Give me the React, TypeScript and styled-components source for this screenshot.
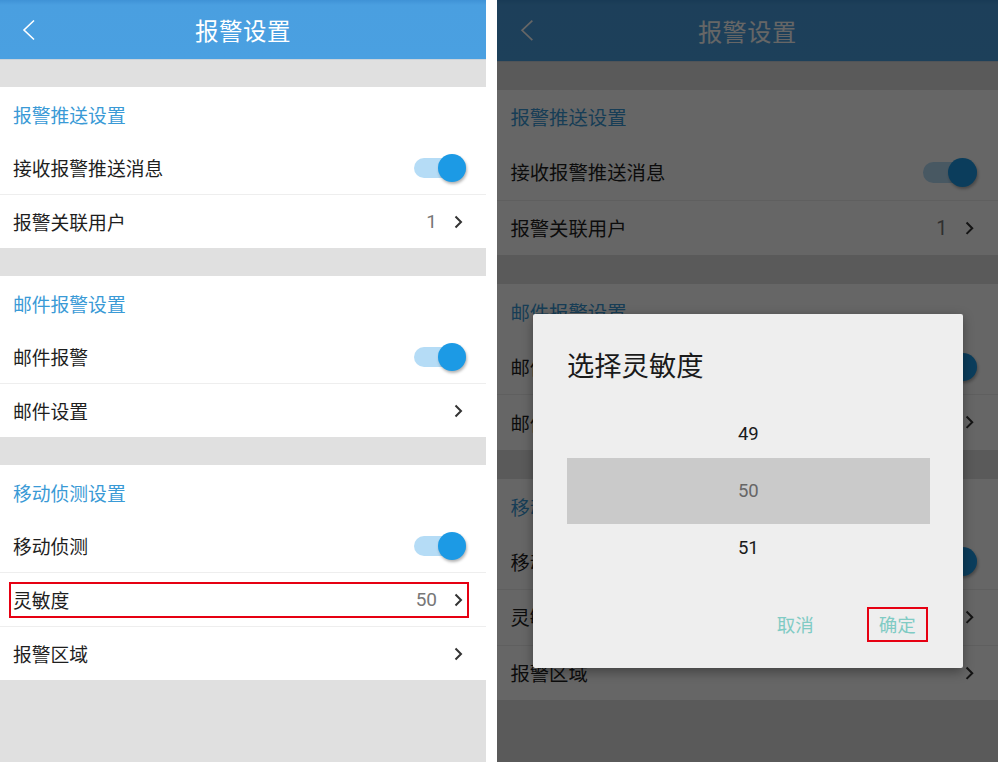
import React from "react";
import styled, { createGlobalStyle } from "styled-components";

const GlobalStyle = createGlobalStyle`
  html, body {
    margin: 0;
    padding: 0;
    background: #ffffff;
  }
  body {
    font-family: Roboto, "Noto Sans CJK SC", "Noto Sans", sans-serif;
  }
`;

const Page = styled.div`
  display: flex;
  gap: 11px;
  width: 998px;
  height: 762px;
  overflow: hidden;
`;

const Screen = styled.div<{ $zoom?: number }>`
  position: relative;
  flex: none;
  width: 486px;
  height: ${(p) => 762 / (p.$zoom || 1)}px;
  zoom: ${(p) => p.$zoom || 1};
  background: #e0e0e0;
  overflow: hidden;
  display: flex;
  flex-direction: column;
`;

const TopBar = styled.header`
  display: grid;
  grid-template-columns: 60px 1fr 60px;
  align-items: center;
  height: 59px;
  flex: none;
  background: linear-gradient(#3f92d6 0, #4a9fe0 5px, #4aa0e1 100%);
  border-bottom: 1px solid #c9d3db;
`;

const BackButton = styled.div`
  display: flex;
  align-items: center;
  padding-left: 22px;
  height: 100%;
`;

const Title = styled.h1`
  margin: 0;
  text-align: center;
  color: #ffffff;
  font-size: 23.5px;
  font-weight: 400;
  letter-spacing: 0.5px;
`;

const Sections = styled.div`
  display: flex;
  flex-direction: column;
  gap: 28px;
  padding-top: 27px;
`;

const Section = styled.section`
  background: #ffffff;
  display: flex;
  flex-direction: column;
`;

const SectionTitle = styled.div`
  height: 54px;
  display: flex;
  align-items: center;
  padding-left: 13px;
  color: #3a9ad6;
  font-size: 18.8px;
`;

const Row = styled.div`
  position: relative;
  height: 53px;
  display: flex;
  align-items: center;
  justify-content: space-between;
  padding: 0 20px 0 13px;
  color: #1e1e1e;
  font-size: 18.8px;
  & + & {
    border-top: 1px solid #eeeeee;
  }
`;

const Trailing = styled.div`
  display: flex;
  align-items: center;
  gap: 17px;
  padding-right: 3px;
`;

const Value = styled.span`
  color: #777777;
  font-size: 19px;
`;

const Track = styled.div`
  position: relative;
  width: 52px;
  height: 20px;
  border-radius: 10px;
  background: #b5dcf6;
`;

const Thumb = styled.div`
  position: absolute;
  right: 0;
  top: -4px;
  width: 28px;
  height: 28px;
  border-radius: 50%;
  background: #1c9ae5;
  box-shadow: 1px 2px 3px rgba(0, 0, 0, 0.3);
`;

const Highlight = styled.div`
  position: absolute;
  left: 9px;
  right: 17px;
  top: 9px;
  height: 36px;
  box-sizing: border-box;
  border: 2px solid #e60012;
  pointer-events: none;
`;

const Overlay = styled.div`
  position: absolute;
  inset: 0;
  background: rgba(0, 0, 0, 0.6);
`;

const Dialog = styled.div`
  position: absolute;
  left: 35px;
  top: 305px;
  width: 417px;
  height: 344px;
  box-sizing: border-box;
  background: #eeeeee;
  border-radius: 2px;
  box-shadow: 0 3px 10px rgba(0, 0, 0, 0.35);
  display: flex;
  flex-direction: column;
  padding-top: 34px;
`;

const DialogTitle = styled.div`
  padding-left: 33px;
  line-height: 36px;
  font-size: 26.5px;
  color: #1a1a1a;
`;

const Picker = styled.div`
  margin: 23px 32px 0 33px;
  display: flex;
  flex-direction: column;
`;

const PickerItem = styled.div<{ $selected?: boolean }>`
  height: ${(p) => (p.$selected ? 64 : 47)}px;
  display: flex;
  align-items: center;
  justify-content: center;
  font-size: 18px;
  color: ${(p) => (p.$selected ? "#666666" : "#1a1a1a")};
  background: ${(p) => (p.$selected ? "#cacaca" : "transparent")};
`;

const Actions = styled.div`
  display: flex;
  justify-content: flex-end;
  gap: 40px;
  margin-top: 33px;
  padding-right: 34px;
`;

const ActionButton = styled.div<{ $highlight?: boolean }>`
  width: 59px;
  height: 34px;
  box-sizing: border-box;
  display: flex;
  align-items: center;
  justify-content: center;
  color: #80cbc4;
  font-size: 18px;
  border: 2px solid ${(p) => (p.$highlight ? "#e60012" : "transparent")};
`;

const Chevron = ({ color = "#333333" }: { color?: string }) => (
  <svg width="9" height="14" viewBox="0 0 9 14">
    <polyline points="1.5,1.5 7,7 1.5,12.5" fill="none" stroke={color} strokeWidth="2" />
  </svg>
);

const BackIcon = () => (
  <svg width="14" height="22" viewBox="0 0 14 22">
    <polyline points="12,1.5 2,11 12,20.5" fill="none" stroke="#ffffff" strokeWidth="1.6" />
  </svg>
);

const Toggle = () => (
  <Track>
    <Thumb />
  </Track>
);

type Item = { label: string; value?: string; toggle?: boolean; mark?: boolean };

const sections: { title: string; items: Item[] }[] = [
  {
    title: "报警推送设置",
    items: [
      { label: "接收报警推送消息", toggle: true },
      { label: "报警关联用户", value: "1" },
    ],
  },
  {
    title: "邮件报警设置",
    items: [
      { label: "邮件报警", toggle: true },
      { label: "邮件设置" },
    ],
  },
  {
    title: "移动侦测设置",
    items: [
      { label: "移动侦测", toggle: true },
      { label: "灵敏度", value: "50", mark: true },
      { label: "报警区域" },
    ],
  },
];

const SettingsScreen = ({ withDialog }: { withDialog?: boolean }) => (
  <Screen $zoom={withDialog ? 1.03 : 1}>
    <TopBar>
      <BackButton>
        <BackIcon />
      </BackButton>
      <Title>报警设置</Title>
      <div />
    </TopBar>
    <Sections>
      {sections.map((s) => (
        <Section key={s.title}>
          <SectionTitle>{s.title}</SectionTitle>
          {s.items.map((it) => (
            <Row key={it.label}>
              <span>{it.label}</span>
              {it.toggle ? (
                <Toggle />
              ) : (
                <Trailing>
                  {it.value && <Value>{it.value}</Value>}
                  <Chevron />
                </Trailing>
              )}
              {it.mark && !withDialog && <Highlight />}
            </Row>
          ))}
        </Section>
      ))}
    </Sections>
    {withDialog && (
      <>
        <Overlay />
        <Dialog>
          <DialogTitle>选择灵敏度</DialogTitle>
          <Picker>
            <PickerItem>49</PickerItem>
            <PickerItem $selected>50</PickerItem>
            <PickerItem>51</PickerItem>
          </Picker>
          <Actions>
            <ActionButton>取消</ActionButton>
            <ActionButton $highlight>确定</ActionButton>
          </Actions>
        </Dialog>
      </>
    )}
  </Screen>
);

const App = () => (
  <>
    <GlobalStyle />
    <Page>
      <SettingsScreen />
      <SettingsScreen withDialog />
    </Page>
  </>
);

export default App;
